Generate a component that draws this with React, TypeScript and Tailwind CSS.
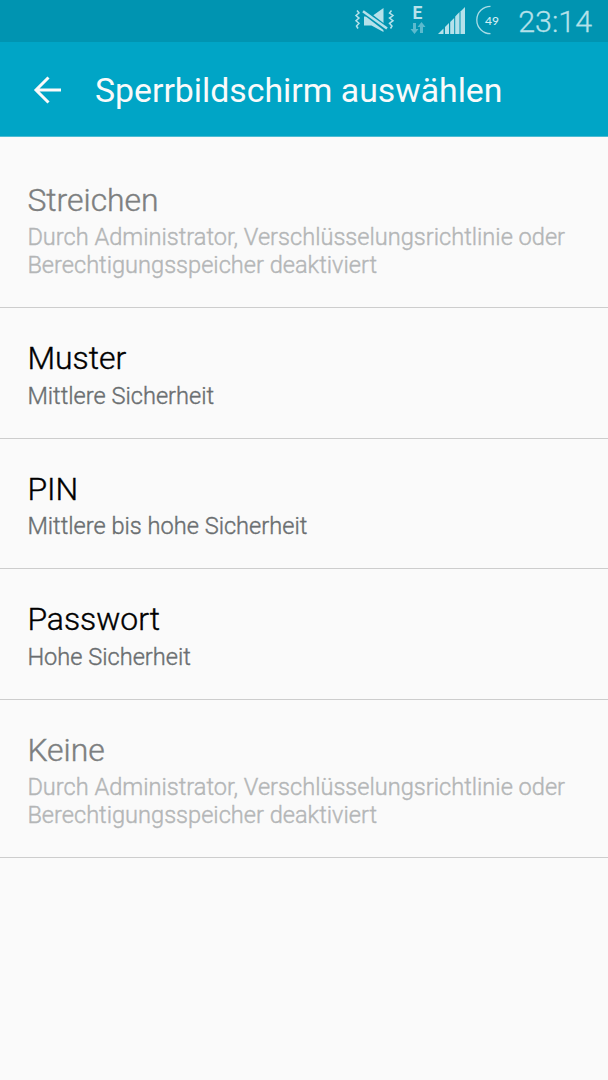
interface LockOption {
  title: string;
  summary: string;
  disabled?: boolean;
}

const ADMIN_NOTE =
  "Durch Administrator, Verschlüsselungsrichtlinie oder Berechtigungsspeicher deaktiviert";

const options: LockOption[] = [
  { title: "Streichen", summary: ADMIN_NOTE, disabled: true },
  { title: "Muster", summary: "Mittlere Sicherheit" },
  { title: "PIN", summary: "Mittlere bis hohe Sicherheit" },
  { title: "Passwort", summary: "Hohe Sicherheit" },
  { title: "Keine", summary: ADMIN_NOTE, disabled: true },
];

function MutedVibrateIcon() {
  return (
    <svg width="42" height="26" viewBox="0 0 42 26" fill="none">
      <path
        d="M3 2.500l2 2.500-3 2.500 3 2.600-3 2.600 3 2.600-2.500 2.700 1.500 2.500"
        stroke="#b5e1ea"
        strokeWidth="1.500"
      />
      <path
        d="M37.500 2.500l-2 2.500 3.500 2.500-3.500 2.600 3.500 2.600-3.500 2.600 2.500 2.700-1.500 2.500"
        stroke="#b5e1ea"
        strokeWidth="1.500"
      />
      <path d="M10 8.500h7.500L29.500 0v24L17.500 17.500H10z" fill="#b5e1ea" />
      <path d="M8 2l26 20" stroke="#0094b1" strokeWidth="5.500" />
      <path d="M9 3.200L33 20.500" stroke="#b5e1ea" strokeWidth="2.600" />
    </svg>
  );
}

function MobileDataIcon() {
  return (
    <div className="flex w-4 flex-col items-center">
      <span className="-ml-px text-[17.5px] leading-[17px] font-bold text-[#b8e2eb]">E</span>
      <svg width="16" height="12" viewBox="0 0 16 12" fill="#5bbace">
        <path d="M3 1h3v6h2.500l-4 5-4-5H3z" />
        <path d="M10 11h3V5h2.500l-4-5-4 5H10z" />
      </svg>
    </div>
  );
}

function SignalIcon() {
  return (
    <svg width="28" height="28" viewBox="0 0 28 28" fill="#b5e1ea">
      <path d="M0 27l5.500-5.500V27z" />
      <path d="M7 20l4-4v11H7z" />
      <path d="M12.200 15l4-4v16h-4z" />
      <path d="M17.200 9.500l4.300-4.500v22h-4.300z" />
      <path d="M22.500 4.500l4.500-4.500v27h-4.500z" />
    </svg>
  );
}

function BatteryIcon() {
  return (
    <div className="flex w-[28px] items-center">
      <svg className="shrink-0" width="15" height="30" viewBox="0 0 15 30" fill="none">
        <path d="M14.500 1.300A13.700 13.700 0 0 0 14.500 28.700" stroke="#a9dce6" strokeWidth="1.300" />
      </svg>
      <span className="mt-px -ml-[6px] font-[Lato] text-[12px] leading-none font-medium text-[#d2eff5]">
        49
      </span>
    </div>
  );
}

function StatusBar() {
  return (
    <div className="flex h-[42px] items-start justify-end bg-[#0094b1] pr-4">
      <div className="mt-[8px] mr-[14px]">
        <MutedVibrateIcon />
      </div>
      <div className="mt-[5px] mr-[12px]">
        <MobileDataIcon />
      </div>
      <div className="mt-[7px] mr-[10px]">
        <SignalIcon />
      </div>
      <div className="mt-[5px] mr-[14px]">
        <BatteryIcon />
      </div>
      <span className="mt-[4px] w-[74px] text-right text-[30.4px] leading-[36px] font-light text-[#b5e1ea] [-webkit-text-stroke:0.3px]">
        23:14
      </span>
    </div>
  );
}

function AppBar() {
  return (
    <header className="flex h-[95px] items-center border-b border-[#4dbcd3] bg-[#00a5c6] pl-[33px]">
      <svg
        className="mt-px"
        width="29"
        height="28"
        viewBox="0 0 29 28"
        fill="none"
        stroke="#fafafa"
        strokeWidth="3"
      >
        <path d="M28 14H3M15.500 1.500L3 14l12.500 12.500" />
      </svg>
      <h1 className="mt-[4px] ml-[33px] text-[33.8px] leading-[40px] text-[#fafafa]">
        Sperrbildschirm auswählen
      </h1>
    </header>
  );
}

function OptionRow({ title, summary, disabled }: LockOption) {
  return (
    <li className="border-b border-[#cdcdcd] pt-[31.4px] pr-[27px] pb-[27.3px] pl-[27.4px] font-light [-webkit-text-stroke:0.4px]">
      <h2
        className={`text-[31.9px] leading-[38px] ${disabled ? "text-[#7d7f80]" : "text-black"}`}
      >
        {title}
      </h2>
      <p
        className={`mt-[5.3px] text-[23.6px] leading-[27.6px] ${disabled ? "text-[#b4b6b7]" : "text-[#6a6e70]"}`}
      >
        {summary}
      </p>
    </li>
  );
}

export default function App() {
  return (
    <div className="h-[1080px] w-[608px] overflow-hidden bg-[#fafafa] font-[Roboto,sans-serif]">
      <StatusBar />
      <AppBar />
      <ul className="pt-[12.75px]">
        {options.map((option) => (
          <OptionRow key={option.title} {...option} />
        ))}
      </ul>
    </div>
  );
}
